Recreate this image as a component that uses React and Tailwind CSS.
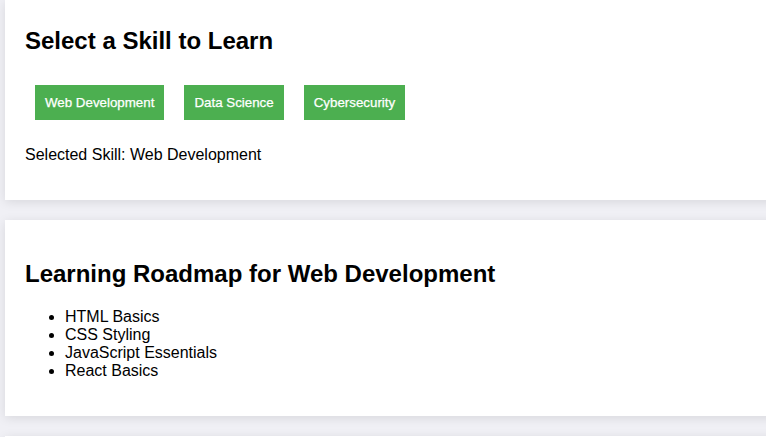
import { useState } from 'react';

const SKILLS = ['Web Development', 'Data Science', 'Cybersecurity'];

const ROADMAPS = {
  'Web Development': ['HTML Basics', 'CSS Styling', 'JavaScript Essentials', 'React Basics'],
  'Data Science': ['Python Basics', 'Statistics', 'Pandas & NumPy', 'Machine Learning'],
  Cybersecurity: ['Networking Basics', 'Linux Fundamentals', 'Cryptography', 'Ethical Hacking'],
};

export default function App() {
  const [skill, setSkill] = useState('Web Development');

  return (
    <div
      className="h-[437px] overflow-hidden bg-[#f0f0f5] pl-[5px] text-black"
      style={{ fontFamily: '"Liberation Sans", Arial, sans-serif' }}
    >
      {/* Skill picker */}
      <div className="-mr-6 bg-white px-5 pt-[27px] pb-[36px] shadow-[0_2px_10px_rgba(0,0,0,0.1)]">
        <h2 className="text-[24px] leading-[28px] font-bold">Select a Skill to Learn</h2>
        <div className="mt-[30px] flex gap-5 pl-[10px]">
          {SKILLS.map((s) => (
            <button
              key={s}
              onClick={() => setSkill(s)}
              className="bg-[#4CAF50] px-[10px] py-[10px] text-[13.333px] leading-[15px] text-white [-webkit-text-stroke:0.25px_white]"
            >
              {s}
            </button>
          ))}
        </div>
        <p className="mt-[26px] text-[16px] leading-[18px]">Selected Skill: {skill}</p>
      </div>

      {/* Roadmap */}
      <div className="-mr-6 mt-5 bg-white px-5 pt-[40px] pb-[36px] shadow-[0_2px_10px_rgba(0,0,0,0.1)]">
        <h2 className="text-[24px] leading-[28px] font-bold">Learning Roadmap for {skill}</h2>
        <ul className="mt-[20px] list-disc pl-10 text-[16px] leading-[18px]">
          {ROADMAPS[skill].map((item) => (
            <li key={item}>{item}</li>
          ))}
        </ul>
      </div>

      <div className="-mr-6 mt-5 h-10 bg-white shadow-[0_2px_10px_rgba(0,0,0,0.1)]" />
    </div>
  );
}
